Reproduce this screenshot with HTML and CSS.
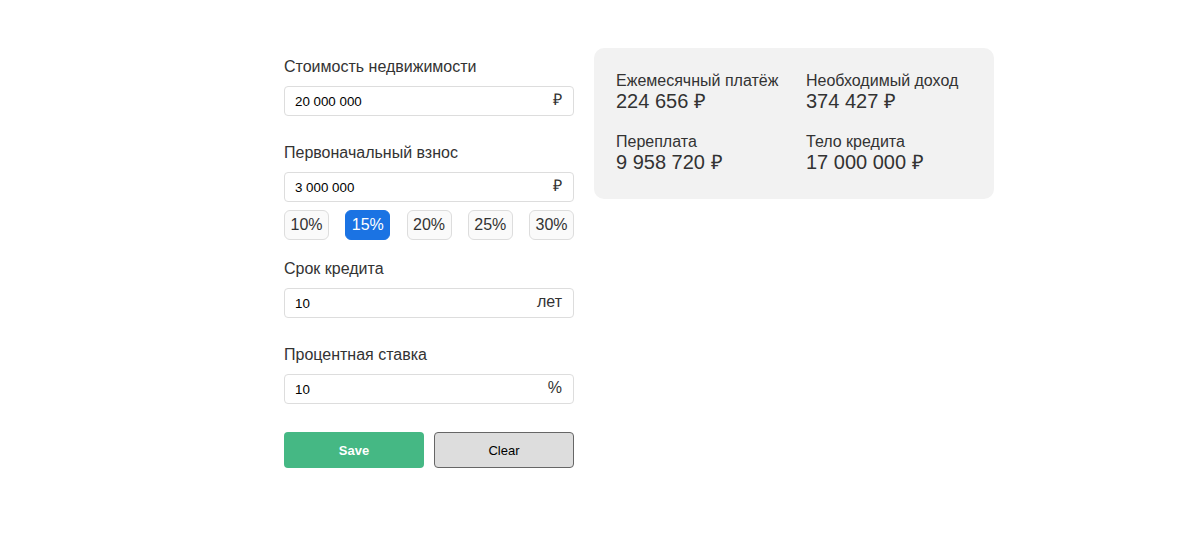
FILE: index.html
```html
<!DOCTYPE html>
<html lang="ru">
<head>
<meta charset="utf-8">
<title>Ипотечный калькулятор</title>
<link rel="stylesheet" href="styles.css">
</head>
<body>
<div class="page">
  <form class="form">
    <div class="field">
      <label class="label">Стоимость недвижимости</label>
      <div class="input-wrap">
        <input class="input" type="text" value="20 000 000">
        <span class="suffix">₽</span>
      </div>
    </div>
    <div class="field">
      <label class="label">Первоначальный взнос</label>
      <div class="input-wrap">
        <input class="input" type="text" value="3 000 000">
        <span class="suffix">₽</span>
      </div>
      <div class="percents">
        <button type="button" class="pct">10%</button>
        <button type="button" class="pct active">15%</button>
        <button type="button" class="pct">20%</button>
        <button type="button" class="pct">25%</button>
        <button type="button" class="pct">30%</button>
      </div>
    </div>
    <div class="field field-after-pct">
      <label class="label">Срок кредита</label>
      <div class="input-wrap">
        <input class="input" type="text" value="10">
        <span class="suffix">лет</span>
      </div>
    </div>
    <div class="field">
      <label class="label">Процентная ставка</label>
      <div class="input-wrap">
        <input class="input" type="text" value="10">
        <span class="suffix">%</span>
      </div>
    </div>
    <div class="actions">
      <button type="button" class="btn btn-save">Save</button>
      <button type="button" class="btn btn-clear">Clear</button>
    </div>
  </form>
  <div class="result">
    <div class="item">
      <div class="item-label">Ежемесячный платёж</div>
      <div class="item-value">224 656 ₽</div>
    </div>
    <div class="item">
      <div class="item-label">Необходимый доход</div>
      <div class="item-value">374 427 ₽</div>
    </div>
    <div class="item">
      <div class="item-label">Переплата</div>
      <div class="item-value">9 958 720 ₽</div>
    </div>
    <div class="item">
      <div class="item-label">Тело кредита</div>
      <div class="item-value">17 000 000 ₽</div>
    </div>
  </div>
</div>
</body>
</html>
```

FILE: styles.css
```css
* { box-sizing: border-box; }
html, body { margin: 0; padding: 0; background: #fff; }
body {
  font-family: "Liberation Sans", Arial, sans-serif;
  color: #333;
}
.page {
  display: flex;
  align-items: flex-start;
  gap: 20px;
  padding: 48px 0 0 284px;
}
.form {
  width: 290px;
  display: flex;
  flex-direction: column;
  padding-top: 8px;
}
.field { display: flex; flex-direction: column; margin-bottom: 26px; }
.field-after-pct { margin-top: -8px; }
.label {
  font-size: 16px;
  line-height: 20px;
  padding-top: 1px;
  margin-bottom: 9px;
  color: #333;
}
.input-wrap { position: relative; }
.input {
  width: 100%;
  height: 30px;
  border: 1px solid #ddd;
  border-radius: 4px;
  padding: 0 40px 0 10px;
  font-family: "Liberation Sans", Arial, sans-serif;
  font-size: 13.33px;
  color: #000;
  background: #fff;
  outline: none;
}
.suffix {
  position: absolute;
  right: 12px;
  top: 5px;
  font-size: 16px;
  line-height: 18px;
  color: #333;
}
.percents {
  display: flex;
  justify-content: space-between;
  margin-top: 8px;
}
.pct {
  width: 45px;
  height: 30px;
  padding: 0;
  border: 1px solid #ddd;
  border-radius: 6px;
  background: #fafafa;
  font-family: "Liberation Sans", Arial, sans-serif;
  font-size: 16px;
  color: #333;
}
.pct.active {
  background: #1b73e3;
  border-color: #1b73e3;
  color: #fff;
}
.actions {
  display: flex;
  gap: 10px;
  margin-top: 2px;
}
.btn {
  width: 140px;
  height: 36px;
  border-radius: 4px;
  font-family: "Liberation Sans", Arial, sans-serif;
  font-size: 13px;
}
.btn-save {
  background: #45b884;
  border: none;
  color: #fff;
  font-weight: bold;
}
.btn-clear {
  background: #dddddd;
  border: 1px solid #666;
  color: #000;
}
.result {
  width: 400px;
  background: #f2f2f2;
  border-radius: 10px;
  padding: 24px 22px 25px;
  display: grid;
  grid-template-columns: 166px 1fr;
  column-gap: 24px;
  row-gap: 20px;
}
.item-label {
  font-size: 16px;
  line-height: 18px;
  color: #333;
}
.item-value {
  font-size: 20px;
  line-height: 23px;
  color: #333;
}
```
